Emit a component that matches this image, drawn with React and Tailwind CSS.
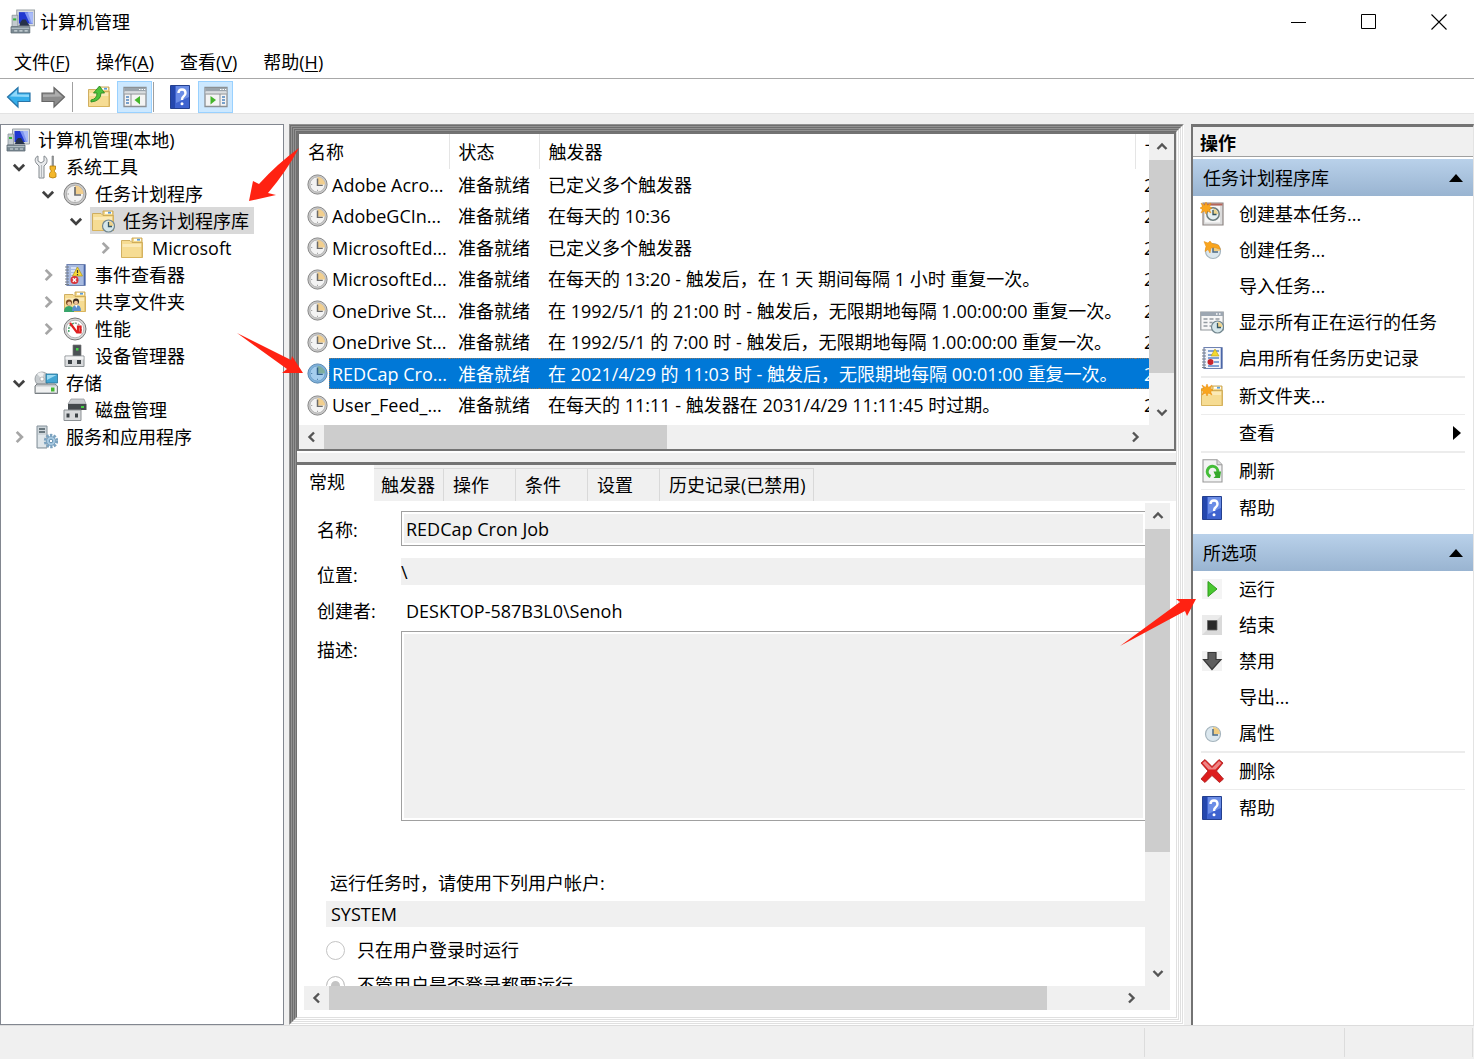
import React from "react";

/* ---------- icons ---------- */

function Svg({ children, className = "size-6", box = "0 0 24 24" }) {
  return (
    <svg viewBox={box} className={`shrink-0 ${className}`} aria-hidden="true">
      {children}
    </svg>
  );
}

function ComputerIcon({ className }) {
  return (
    <Svg className={className}>
      <path d="M6.500 1h17v15h-17z" fill="#d9dde0" stroke="#9aa1a6" />
      <path d="M8.500 3h13.500v11H8.500z" fill="#2038d0" />
      <path d="M14 3h8v11h-3z" fill="#7d94f0" />
      <path d="M17 3h5v11h-1z" fill="#a9bbf8" />
      <path d="M2 6h5.500v11H2z" fill="#c3cacf" stroke="#8b959c" strokeWidth=".8" />
      <path d="M3 9h3v2H3z" fill="#35b53a" />
      <path d="M10 12.500l2-2.500h3l2 3.500 2 2.500H9z" fill="#26324a" />
      <path d="M1 17h18v6H1z" fill="#7b8a93" stroke="#5d6b73" strokeWidth=".8" />
      <path d="M1.500 18.500h17" stroke="#b4c0c6" strokeWidth="1.200" />
      <path d="M4 21h3M9 21h3M14 21h3" stroke="#d5dde1" strokeWidth="1.200" />
    </Svg>
  );
}

function ToolsIcon() {
  return (
    <Svg>
      <path d="M4 1v5l3 2 3-2V1c3 1 4 5 2 8l-2 2v12H5V11L3 9C0 6 1 2 4 1z" fill="#e8eaec" stroke="#858b90" />
      <path d="M7.500 10v12" stroke="#b3b8bc" />
      <path d="M18 1h1.500v11H18z" fill="#9aa0a4" stroke="#777" strokeWidth=".6" />
      <path d="M16 11h5.500v3l-1 1.500v1l1.500 2V22q-3 2-6.500 0v-3.500l1.500-2v-1L16 14z" fill="#f3b72c" stroke="#b37b08" strokeWidth=".8" />
    </Svg>
  );
}

function ClockIcon({ className, blue = false }) {
  return (
    <Svg className={className}>
      <circle cx="12" cy="12" r="11" fill={blue ? "#7fb2dc" : "#c9c9c9"} stroke={blue ? "#4f7fa8" : "#7d7d7d"} />
      <circle cx="12" cy="12" r="8.600" fill={blue ? "#a5cdee" : "#f3f3f3"} stroke={blue ? "#6698c2" : "#a5a5a5"} strokeWidth=".8" />
      <path d="M12 12V3.500a8.500 8.500 0 0 1 8.500 8.500z" fill={blue ? "#7fae9f" : "#f2cf8e"} />
      <path d="M12 5v8h6" fill="none" stroke={blue ? "#2f5f8a" : "#6c6c6c"} strokeWidth="1.700" />
      <path d="M4.500 12h1.500M12 18v1.500" stroke={blue ? "#4679a5" : "#999"} />
    </Svg>
  );
}

function FolderShape() {
  return (
    <>
      <path d="M12 2h10v5H12z" fill="#f3d98c" stroke="#c7a24c" strokeWidth=".9" />
      <path d="M14 2.800h7v2h-7z" fill="#fff" />
      <path d="M17 2.800h3v1.800h-3z" fill="#5b9bd8" />
      <path d="M1.500 4.500H10l2 2h10.500v15h-21z" fill="#f6dc93" stroke="#cba856" strokeWidth=".9" />
      <path d="M2.500 8h19v3h-19z" fill="#fbeab8" />
      <path d="M22 7v14.500H2" fill="none" stroke="#d9b55c" />
    </>
  );
}

function FolderIcon() {
  return (
    <Svg>
      <FolderShape />
    </Svg>
  );
}

function SmallClock() {
  return (
    <>
      <circle cx="17.500" cy="17" r="6" fill="#d5e6ea" stroke="#71868e" strokeWidth="1.200" />
      <path d="M17.500 17v-5a5 5 0 0 1 5 5z" fill="#f0d48d" />
      <path d="M17.500 13v4.500h3.500" fill="none" stroke="#365764" strokeWidth="1.300" />
    </>
  );
}

function FolderClockIcon() {
  return (
    <Svg>
      <FolderShape />
      <SmallClock />
    </Svg>
  );
}

function NotebookShape({ fill }) {
  return (
    <>
      <path d="M4 1.500h18v21H4z" fill={fill} stroke="#6f82b0" strokeWidth="1.200" />
      <path d="M21.500 2v20" stroke="#4a66a8" strokeWidth="1.600" />
      <path d="M2 4h4M2 7h4M2 10h4M2 13h4M2 16h4M2 19h4M2 21.500h4" stroke="#777f87" strokeWidth="1.100" />
    </>
  );
}

function EventIcon() {
  return (
    <Svg>
      <NotebookShape fill="#a8bbe0" />
      <path d="M8 5h5M8 8h4M8 11h3M8 14h3" stroke="#e8eefc" strokeWidth="1.400" />
      <path d="M14.500 4l5 9h-10z" fill="#f7d93a" stroke="#b39615" strokeWidth=".7" />
      <path d="M14.500 7v3M14.500 11v1.200" stroke="#333" strokeWidth="1.200" />
      <circle cx="11.500" cy="17" r="4" fill="#d8343a" />
      <path d="M9.800 15.300l3.400 3.400M13.200 15.300l-3.400 3.400" stroke="#fff" strokeWidth="1.300" />
    </Svg>
  );
}

function HistoryIcon() {
  return (
    <Svg>
      <NotebookShape fill="#f2f5fb" />
      <path d="M8 5h11M8 9h4M8 12h11M14 16h5M8 20h11" stroke="#5c86c8" strokeWidth="1.300" />
      <path d="M15 3l4 7h-8z" fill="#f4d92f" stroke="#b99c14" strokeWidth=".6" />
      <circle cx="10.500" cy="16" r="3" fill="#c9252b" />
    </Svg>
  );
}

function SharedIcon() {
  return (
    <Svg>
      <FolderShape />
      <circle cx="6" cy="12.500" r="3" fill="#7b4a24" />
      <circle cx="6.300" cy="13.600" r="2" fill="#f0c49c" />
      <path d="M1 22q0-6 5-6t5 6z" fill="#36a56b" />
      <circle cx="13" cy="11.500" r="3" fill="#3b2a1e" />
      <circle cx="13" cy="12.700" r="2" fill="#f0c49c" />
      <path d="M9 21q0-6 4.500-6t4.500 6z" fill="#5b8fce" />
      <path d="M12 15l1.300 3 1.300-3z" fill="#fff" />
    </Svg>
  );
}

function PerfIcon() {
  return (
    <Svg>
      <circle cx="12" cy="12" r="11" fill="#d8d8d8" stroke="#777" />
      <circle cx="12" cy="12" r="8.800" fill="#fff" stroke="#aaa" strokeWidth=".8" />
      <path d="M6 15a7 7 0 0 1 6-9" fill="none" stroke="#4aa36c" strokeWidth="1.500" strokeDasharray="2 1" />
      <path d="M12 6a7 7 0 0 1 6 9" fill="none" stroke="#999" strokeWidth="1.500" strokeDasharray="2 1" />
      <path d="M7 6l7 9.500h3.500V9.500H15V15" fill="none" stroke="#e02020" strokeWidth="2.200" />
    </Svg>
  );
}

function DeviceIcon() {
  return (
    <Svg>
      <path d="M10 1h8v12h-8z" fill="#4b5155" stroke="#777" strokeWidth=".7" />
      <path d="M13 4h2.500v2.500H13z" fill="#46d34b" />
      <path d="M2 12h19v10.500H2z" fill="#d8dadc" stroke="#8c9194" />
      <path d="M2.500 12.500h18v3h-18z" fill="#f2f3f4" />
      <path d="M5 16h4v4H5zM14 16h4v4h-4z" fill="#3c4246" />
    </Svg>
  );
}

function StorageIcon() {
  return (
    <Svg>
      <circle cx="8" cy="8" r="7" fill="#c7cccf" stroke="#8a9196" strokeWidth=".8" />
      <path d="M8 8L3 3q3-3 7-1z" fill="#eef0f1" />
      <circle cx="8" cy="8" r="2" fill="#fff" stroke="#999" strokeWidth=".6" />
      <path d="M12 3h11.500v9H12z" fill="#42a5d3" stroke="#266e93" strokeWidth=".8" />
      <path d="M13 4h9.500l-9.500 5z" fill="#9cdaf2" />
      <path d="M1 15l2-2h18l2.500 2v7.500H1z" fill="#c4c8cb" stroke="#787e82" />
      <path d="M2 15.500h20.500v5.500H2z" fill="#f0f1f1" />
      <path d="M17 16.500h3.500v4H17z" fill="#45b630" />
    </Svg>
  );
}

function DiskIcon() {
  return (
    <Svg>
      <path d="M8 1h13l2 5H5z" fill="#c9cccf" stroke="#8f9498" strokeWidth=".7" />
      <path d="M5 6h18.500v6H5z" fill="#44494d" />
      <path d="M18 8h3v2h-3z" fill="#45d345" />
      <path d="M1 12h17v10.500H1z" fill="#d8dadc" stroke="#8c9194" />
      <path d="M3.500 15.500h3v4h-3zM12 15.500h3v4h-3z" fill="#3c4246" />
    </Svg>
  );
}

function ServicesIcon() {
  return (
    <Svg>
      <path d="M3 1h10v22H3z" fill="#cdd5da" stroke="#84919a" />
      <path d="M5 4h6M5 7h6" stroke="#4a5961" strokeWidth="1.400" />
      <path d="M4 10h8v12H4z" fill="#dfe6ea" />
      <circle cx="17" cy="16" r="5.800" fill="none" stroke="#7ba2bf" strokeWidth="2.800" strokeDasharray="2.400 1.250" />
      <circle cx="17" cy="16" r="4.500" fill="#a9cbe3" stroke="#7ba2bf" />
      <circle cx="17" cy="16" r="1.800" fill="#fff" stroke="#5f8cad" />
    </Svg>
  );
}

function BackIcon() {
  return (
    <Svg className="h-6 w-[26px]" box="0 0 26 24">
      <path d="M1.500 12L12 2.500V8h12v8.500H12V22z" fill="#35aeea" stroke="#2874a8" strokeWidth="1.200" />
      <path d="M4 11.500L11 5v4.500h12V12z" fill="#8fd8fa" />
    </Svg>
  );
}

function ForwardIcon() {
  return (
    <Svg className="h-6 w-[26px]" box="0 0 26 24">
      <path d="M24.500 12L14 2.500V8H2v8.500h12V22z" fill="#8c8c8c" stroke="#666" strokeWidth="1.200" />
      <path d="M22 11.500L15 5v4.500H3V12z" fill="#adadad" />
    </Svg>
  );
}

function FolderUpIcon() {
  return (
    <Svg>
      <FolderShape />
      <path d="M4 15q6-1 6-7H6.500L12.500 1l5 7H14q0 8-10 9z" fill="#4cc23c" stroke="#2b8a23" strokeWidth=".9" />
    </Svg>
  );
}

function PaneIcon({ right = false }) {
  return (
    <Svg className="h-[22px] w-6" box="0 0 24 22">
      <path d="M1 1.500h22v19H1z" fill="#f4f4f4" stroke="#8b9094" strokeWidth="1.300" />
      <path d="M1.500 2h21v3.500h-21z" fill="#9aa4ac" />
      <path d="M16 3.500h1.500M18.500 3.500H20M21 3.500h1.200" stroke="#fff" strokeWidth="1.200" />
      <path d="M1.500 6.500h21" stroke="#d9dde0" strokeWidth="2" />
      {right ? (
        <>
          <path d="M16 8v12M1.500 8h21" stroke="#8b9094" />
          <path d="M18 11h3M18 14h3M18 17h3" stroke="#4e84bd" strokeWidth="1.500" />
          <path d="M6.500 10l5.500 4-5.500 4.500z" fill="#45b52c" />
        </>
      ) : (
        <>
          <path d="M8 8v12M1.500 8h21" stroke="#8b9094" />
          <path d="M3 11h3M3 14h3M3 17h3" stroke="#4e84bd" strokeWidth="1.500" />
          <path d="M17 10l-5.500 4 5.500 4.500z" fill="#45b52c" />
        </>
      )}
    </Svg>
  );
}

function HelpIcon() {
  return (
    <Svg>
      <path d="M2.500.5h19v23h-19z" fill="#3e63cf" stroke="#24408f" />
      <path d="M3 1h4v22H3z" fill="#2447ad" />
      <path d="M8 1h13v11L8 18z" fill="#6b8de6" />
      <path d="M10.500 8q0-3.500 3.500-3.500T17.500 8q0 2-1.800 3.300Q14 12.500 14 15" fill="none" stroke="#fff" strokeWidth="2.400" />
      <circle cx="14" cy="18.700" r="1.500" fill="#fff" />
    </Svg>
  );
}

function Spark({ x, y }) {
  return (
    <g transform={`translate(${x} ${y})`}>
      <path d="M0-6l1.500 3.500L5-5 3.500-1.500 6 0 3.500 1.500 5 5 1.500 3 0 6l-1.500-3L-5 5l1.500-3.500L-6 0l2.500-1.500L-5-5l3.500 2.500z" fill="#f9a51e" stroke="#e58a0c" strokeWidth=".5" />
    </g>
  );
}

function BasicTaskIcon() {
  return (
    <Svg>
      <path d="M3 1h20v22H3z" fill="#dcdcdc" stroke="#8e8583" strokeWidth="1.200" />
      <path d="M4 1.500h18.500v2H4z" fill="#b5655a" />
      <path d="M5 4h15v16.500H5z" fill="#f6f6f6" />
      <circle cx="13" cy="12" r="6.200" fill="#e6eff0" stroke="#6c7c7c" strokeWidth="1.500" />
      <path d="M13 12V7a5 5 0 0 1 5 5z" fill="#ecd58f" />
      <path d="M13 8v4.500h3.500" fill="none" stroke="#33525a" strokeWidth="1.300" />
      <Spark x={6} y={6} />
    </Svg>
  );
}

function TaskIcon({ spark = false }) {
  return (
    <Svg>
      <circle cx="13" cy="13" r="7.500" fill="#dbe7ee" stroke="#a5b4bd" strokeWidth="1.200" />
      <path d="M13 13V6a7 7 0 0 1 7 7z" fill="#f1cd81" />
      <path d="M13 8v6h5" fill="none" stroke="#4d6b83" strokeWidth="1.500" />
      {spark && <path d="M4 3.500l4 1.500 2-2 2 2.500 6.500 1.500 2 4.500-5.500-2-4 .5-1 5-2-3.500-3 2 1-5z" fill="#f9a51e" stroke="#e58a0c" strokeWidth=".5" />}
    </Svg>
  );
}

function RunningIcon() {
  return (
    <Svg>
      <path d="M.8 2h22.400v18H.8z" fill="#f7f7f7" stroke="#92979b" strokeWidth="1.200" />
      <path d="M1 2h22v4H1z" fill="#9da7b2" />
      <path d="M16 4h1.500M19 4h1.500" stroke="#fff" strokeWidth="1.300" />
      <path d="M3.500 9h4M9.500 9h4M15.500 9h4M3.500 12.500h4M9.500 12.500h3M3.500 16h4M9.500 16h2" stroke="#949ba1" strokeWidth="1.300" />
      <SmallClock />
    </Svg>
  );
}

function NewFolderIcon() {
  return (
    <Svg>
      <FolderShape />
      <Spark x={7} y={6} />
    </Svg>
  );
}

function RefreshIcon() {
  return (
    <Svg>
      <path d="M3 .8h14l5 5V23H3z" fill="#f2f3f3" stroke="#999" strokeWidth="1.100" />
      <path d="M17 .8v5h5" fill="#ddd" stroke="#999" />
      <path d="M10.500 17.500A5.300 5.300 0 1 1 17.800 13" fill="none" stroke="#43bd37" strokeWidth="3" />
      <path d="M13.500 12.500H21l-1 6.500h-6.500l2-2z" fill="#36a92c" />
    </Svg>
  );
}

function RunIcon() {
  return (
    <Svg>
      <path d="M2 2h20v20H2z" fill="#f4f4f4" />
      <path d="M8 4.500l9 7.500-9 7.500z" fill="#49c82f" stroke="#2e9c1d" />
    </Svg>
  );
}

function EndIcon() {
  return (
    <Svg>
      <path d="M2 2h20v20H2z" fill="#dadada" />
      <path d="M2 2h20L2 22z" fill="#ebebeb" />
      <path d="M7.500 7.500h9.500V17H7.500z" fill="#292929" stroke="#666" strokeWidth=".8" />
    </Svg>
  );
}

function DisableIcon() {
  return (
    <Svg>
      <path d="M2 2h20v20H2z" fill="#f2f2f2" />
      <path d="M8 3.500h8v7h5L12 20.500 3.500 10.500H8z" fill="#5e5e5e" stroke="#383838" strokeWidth="1.200" />
    </Svg>
  );
}

function DeleteIcon() {
  return (
    <Svg>
      <path d="M1 4l4-3.500 7 7 7-7L23 4l-6.500 8 7 8-4 3.500-7.500-7-7 7-4-3.500 7-8z" fill="#dd1d1d" stroke="#a71919" strokeWidth=".8" />
      <path d="M2.500 4L5 2l7 7 7-7 2.500 2-6 6.500h-7z" fill="#ee8585" />
    </Svg>
  );
}

function Chevron({ dir, className = "size-3.5 text-[#555]" }) {
  const d = {
    up: "M2.500 9L7 4.500 11.500 9",
    down: "M2.500 5L7 9.500 11.500 5",
    left: "M9 2.500L4.500 7 9 11.500",
    right: "M5 2.500L9.500 7 5 11.500",
  }[dir];
  return (
    <Svg box="0 0 14 14" className={className}>
      <path d={d} fill="none" stroke="currentColor" strokeWidth="2.400" />
    </Svg>
  );
}

/* ---------- window chrome ---------- */

function TitleBar() {
  return (
    <header className="flex h-[43px] shrink-0 items-center pl-2.5">
      <ComputerIcon className="size-[25px]" />
      <h1 className="ml-[5px]">计算机管理</h1>
      <div className="ml-auto flex h-full">
        <button aria-label="最小化" className="flex w-[70px] items-center justify-center">
          <Svg box="0 0 16 16" className="size-4">
            <path d="M0 8.500h15" stroke="#000" />
          </Svg>
        </button>
        <button aria-label="最大化" className="flex w-[70px] items-center justify-center">
          <Svg box="0 0 16 16" className="size-4">
            <path d="M.5 .5h14v14H.5z" fill="none" stroke="#000" />
          </Svg>
        </button>
        <button aria-label="关闭" className="flex w-[70px] items-center justify-center">
          <Svg box="0 0 16 16" className="size-4">
            <path d="M.5 .5l15 15M15.500 .5l-15 15" stroke="#000" strokeWidth="1.100" />
          </Svg>
        </button>
      </div>
    </header>
  );
}

function MenuBar() {
  const menus = [["文件", "F"], ["操作", "A"], ["查看", "V"], ["帮助", "H"]];
  return (
    <nav className="flex h-9 shrink-0 items-center border-b border-[#a8a8a8] pt-0.5 pl-px">
      {menus.map(([name, key]) => (
        <button key={key} className="px-[13px]">
          {name}(<u className="underline-offset-2">{key}</u>)
        </button>
      ))}
    </nav>
  );
}

function Toolbar() {
  return (
    <div className="flex h-[35px] shrink-0 items-center border-b border-[#e3e3e3] pt-0.5 pl-1.5">
      <button aria-label="后退"><BackIcon /></button>
      <button aria-label="前进" className="ml-2"><ForwardIcon /></button>
      <span className="ml-1.5 h-[30px] w-px bg-[#a0a0a0]" />
      <button aria-label="上移一级" className="ml-3.5"><FolderUpIcon /></button>
      <button aria-label="显示控制台树" className="ml-1.5 flex h-8 w-[35px] items-center justify-center border border-[#99d1ff] bg-[#cce8ff]">
        <PaneIcon />
      </button>
      <span className="ml-px h-[30px] w-px bg-[#a0a0a0]" />
      <button aria-label="帮助" className="ml-3.5"><HelpIcon /></button>
      <button aria-label="显示操作窗格" className="ml-1.5 flex h-8 w-[35px] items-center justify-center border border-[#99d1ff] bg-[#cce8ff]">
        <PaneIcon right />
      </button>
    </div>
  );
}

/* ---------- console tree ---------- */

const indents = ["pl-[4px]", "pl-[4px]", "pl-[33px]", "pl-[61px]", "pl-[90px]"];

const tree = [
  { level: 0, icon: <ComputerIcon />, label: "计算机管理(本地)" },
  { level: 1, open: true, icon: <ToolsIcon />, label: "系统工具" },
  { level: 2, open: true, icon: <ClockIcon />, label: "任务计划程序" },
  { level: 3, open: true, icon: <FolderClockIcon />, label: "任务计划程序库", selected: true },
  { level: 4, open: false, icon: <FolderIcon />, label: "Microsoft" },
  { level: 2, open: false, icon: <EventIcon />, label: "事件查看器" },
  { level: 2, open: false, icon: <SharedIcon />, label: "共享文件夹" },
  { level: 2, open: false, icon: <PerfIcon />, label: "性能" },
  { level: 2, icon: <DeviceIcon />, label: "设备管理器" },
  { level: 1, open: true, icon: <StorageIcon />, label: "存储" },
  { level: 2, icon: <DiskIcon />, label: "磁盘管理" },
  { level: 1, open: false, icon: <ServicesIcon />, label: "服务和应用程序" },
];

function Tree() {
  return (
    <aside className="w-[284px] shrink-0 border border-[#828790] bg-white pt-px">
      <ul role="tree">
        {tree.map((n) => (
          <li key={n.label} role="treeitem" className={`flex h-[27px] items-center ${indents[n.level]}`}>
            {n.level > 0 && (
              <span className="flex w-7 shrink-0 justify-center">
                {n.open === true && <Chevron dir="down" className="size-4 text-[#404040]" />}
                {n.open === false && <Chevron dir="right" className="size-4 text-[#a6a6a6]" />}
              </span>
            )}
            <button className={`flex h-[27px] items-center pr-[5px] pl-px ${n.selected ? "bg-[#d9d9d9]" : ""}`}>
              {n.icon}
              <span className="ml-2 whitespace-nowrap">{n.label}</span>
            </button>
          </li>
        ))}
      </ul>
    </aside>
  );
}

/* ---------- scroll bars ---------- */

function VScroll({ thumb }) {
  return (
    <div className="flex w-[25px] shrink-0 flex-col items-stretch bg-[#f0f0f0]">
      <button aria-label="向上滚动" className="flex h-[26px] shrink-0 items-center justify-center">
        <Chevron dir="up" />
      </button>
      <div className="min-h-0 flex-1"><div className={`bg-[#cdcdcd] ${thumb}`} /></div>
      <button aria-label="向下滚动" className="flex h-[26px] shrink-0 items-center justify-center">
        <Chevron dir="down" />
      </button>
    </div>
  );
}

function HScroll({ thumb }) {
  return (
    <div className="flex h-6 shrink-0 bg-[#f0f0f0] pr-[26px]">
      <button aria-label="向左滚动" className="flex w-[25px] items-center justify-center">
        <Chevron dir="left" />
      </button>
      <div className="flex-1"><div className={`h-full bg-[#cdcdcd] ${thumb}`} /></div>
      <button aria-label="向右滚动" className="flex w-[26px] items-center justify-center">
        <Chevron dir="right" />
      </button>
    </div>
  );
}

/* ---------- task list ---------- */

const tasks = [
  ["Adobe Acro...", "已定义多个触发器"],
  ["AdobeGCIn...", "在每天的 10:36"],
  ["MicrosoftEd...", "已定义多个触发器"],
  ["MicrosoftEd...", "在每天的 13:20 - 触发后，在 1 天 期间每隔 1 小时 重复一次。"],
  ["OneDrive St...", "在 1992/5/1 的 21:00 时 - 触发后，无限期地每隔 1.00:00:00 重复一次。"],
  ["OneDrive St...", "在 1992/5/1 的 7:00 时 - 触发后，无限期地每隔 1.00:00:00 重复一次。"],
  ["REDCap Cro...", "在 2021/4/29 的 11:03 时 - 触发后，无限期地每隔 00:01:00 重复一次。"],
  ["User_Feed_...", "在每天的 11:11 - 触发器在 2031/4/29 11:11:45 时过期。"],
];

function TaskList() {
  return (
    <section className="flex shrink-0 flex-col border-2 border-[#737373] bg-white">
      <div className="flex h-[291px]">
        <div className="min-w-0 flex-1 overflow-hidden">
          <table className="w-full table-fixed border-collapse text-left whitespace-nowrap">
            <colgroup>
              <col className="w-[150px]" />
              <col className="w-[90px]" />
              <col />
              <col className="w-[14px]" />
            </colgroup>
            <thead>
              <tr className="h-[35px] *:border-r *:border-[#e5e5e5] *:p-0 *:pl-[9px] *:font-normal *:last:border-r-0">
                <th>名称</th>
                <th>状态</th>
                <th>触发器</th>
                <th className="overflow-hidden">下</th>
              </tr>
            </thead>
            <tbody>
              {tasks.map(([name, trigger], i) => {
                const sel = i === 6;
                const cell = sel ? "border-y border-dotted border-[#8a7a6a] bg-[#0078d7] text-white" : "";
                return (
                  <tr key={i} className="odd:h-[31px] even:h-8">
                    <td className="p-0">
                      <div className="flex items-center pl-2">
                        <ClockIcon className="size-[21px]" blue={sel} />
                        <span className={`ml-px flex h-[31px] flex-1 items-center ${sel ? "border-l pl-0.5" : "pl-[3px]"} ${cell}`}>{name}</span>
                      </div>
                    </td>
                    <td className="p-0"><div className={`flex h-[31px] items-center pl-[9px] ${cell}`}>准备就绪</div></td>
                    <td className="p-0"><div className={`flex h-[31px] items-center overflow-hidden pl-[9px] ${cell}`}>{trigger}</div></td>
                    <td className="overflow-hidden p-0"><div className={`flex h-[31px] items-center overflow-hidden pl-[9px] ${cell}`}>2</div></td>
                  </tr>
                );
              })}
            </tbody>
          </table>
        </div>
        <VScroll thumb="h-[89%]" />
      </div>
      <HScroll thumb="w-[43%]" />
    </section>
  );
}

/* ---------- task details ---------- */

const tabs = [
  ["触发器", "w-[70px] pl-[7px]"],
  ["操作", "w-[72px] pl-[9px]"],
  ["条件", "w-[72px] pl-[9px]"],
  ["设置", "w-[72px] pl-[9px]"],
  ["历史记录(已禁用)", "pr-[7px] pl-[9px]"],
];

const boxed = "block w-full border border-r-0 border-[#a0a0a0] bg-[#f0f0f0] px-1 shadow-[inset_0_0_0_2px_#fff] resize-none outline-none";

function Details() {
  return (
    <section className="flex min-h-0 flex-1 flex-col border-t-[3px] border-[#737373] bg-[#f0f0f0]">
      <div role="tablist" className="flex h-9 shrink-0 items-end whitespace-nowrap">
        <button role="tab" aria-selected="true" className="h-full w-[77px] bg-white pb-0.5 pl-3 text-left">常规</button>
        {tabs.map(([label, cls]) => (
          <button key={label} role="tab" aria-selected="false" className={`h-[33px] border-t border-r border-[#d9d9d9] text-left ${cls}`}>
            {label}
          </button>
        ))}
      </div>
      <div className="flex min-h-0 flex-1 flex-col bg-white pt-0.5 pr-1.5 pb-[7px] pl-[7px]">
        <div className="flex min-h-0 flex-1">
          <form className="min-w-0 flex-1 overflow-hidden pt-2">
            <div className="grid grid-cols-[84px_1fr] pl-[13px]">
              <label htmlFor="name" className="pt-[7px]">名称:</label>
              <input id="name" readOnly value="REDCap Cron Job" className={`h-[35px] ${boxed}`} />
              <label htmlFor="place" className="mt-3 pt-[5px]">位置:</label>
              <input id="place" readOnly value={"\\"} className="mt-3 h-[27px] w-full bg-[#f0f0f0] outline-none" />
              <span className="mt-3">创建者:</span>
              <span className="mt-3 pl-[5px]">DESKTOP-587B3L0\Senoh</span>
              <label htmlFor="desc" className="mt-2 pt-[7px]">描述:</label>
              <textarea id="desc" readOnly className={`mt-2 h-[190px] ${boxed}`} />
            </div>
            <div className="mt-[50px] pl-[22px]">
              <label htmlFor="account" className="block pl-1">运行任务时，请使用下列用户帐户:</label>
              <input id="account" readOnly value="SYSTEM" className="mt-1.5 block h-[26px] w-full bg-[#f0f0f0] pl-[5px] outline-none" />
              <label className="mt-[11px] flex items-center">
                <input type="radio" name="logon" disabled className="size-[19px] appearance-none rounded-full border border-[#c4c4c4] bg-white" />
                <span className="ml-3">只在用户登录时运行</span>
              </label>
              <label className="mt-[11px] flex items-center">
                <input type="radio" name="logon" disabled defaultChecked className="size-[19px] appearance-none rounded-full border border-[#c4c4c4] bg-[#c4c4c4] shadow-[inset_0_0_0_4px_#fff]" />
                <span className="ml-3">不管用户是否登录都要运行</span>
              </label>
            </div>
          </form>
          <VScroll thumb="h-[75%]" />
        </div>
        <HScroll thumb="w-[91%]" />
      </div>
    </section>
  );
}

/* Stacked sunken edges: dark on the top and left, light on the bottom and right. */
function Bevels({ depth, children }) {
  if (depth === 0) return children;
  return (
    <div className="flex min-h-0 min-w-0 flex-1 flex-col border border-t-[#929292] border-r-white border-b-white border-l-[#929292]">
      <div className="flex min-h-0 min-w-0 flex-1 flex-col border border-t-[#6e6e6e] border-r-[#e0e0e0] border-b-[#e0e0e0] border-l-[#6e6e6e]">
        <Bevels depth={depth - 1}>{children}</Bevels>
      </div>
    </div>
  );
}

/* ---------- actions pane ---------- */

const groups = [
  {
    title: "任务计划程序库",
    items: [
      { icon: <BasicTaskIcon />, label: "创建基本任务..." },
      { icon: <TaskIcon spark />, label: "创建任务..." },
      { label: "导入任务..." },
      { icon: <RunningIcon />, label: "显示所有正在运行的任务" },
      { icon: <HistoryIcon />, label: "启用所有任务历史记录", line: "h-0.5" },
      { icon: <NewFolderIcon />, label: "新文件夹...", line: "h-px" },
      { label: "查看", more: true, line: "h-0.5" },
      { icon: <RefreshIcon />, label: "刷新", line: "h-px" },
      { icon: <HelpIcon />, label: "帮助" },
    ],
  },
  {
    title: "所选项",
    items: [
      { icon: <RunIcon />, label: "运行" },
      { icon: <EndIcon />, label: "结束" },
      { icon: <DisableIcon />, label: "禁用" },
      { label: "导出..." },
      { icon: <TaskIcon />, label: "属性", line: "h-0.5" },
      { icon: <DeleteIcon />, label: "删除", line: "h-px" },
      { icon: <HelpIcon />, label: "帮助" },
    ],
  },
];

function Actions() {
  return (
    <aside className="w-[283px] shrink-0 border-t-[3px] border-r border-l-2 border-t-[#737373] border-r-[#e3e3e3] border-l-[#737373] bg-white">
      <h2 className="flex h-[30px] items-center border-b border-[#a0a0a0] bg-[#f0f0f0] pt-0.5 pl-[7px] font-bold">操作</h2>
      <div className="pt-0.5">
        {groups.map((g) => (
          <section key={g.title} className="mb-2">
            <button className="flex h-[37px] w-full items-center justify-between bg-linear-to-b from-[#b9d1ea] to-[#99b4d1] pr-2.5 pl-2.5">
              {g.title}
              <Svg box="0 0 14 8" className="h-2 w-3.5"><path d="M7 0l7 8H0z" /></Svg>
            </button>
            <ul>
              {g.items.map((it) => (
                <li key={it.label}>
                  <button className="flex h-9 w-full items-center pr-3 pl-[7px]">
                    <span className="mr-[15px] flex w-6 shrink-0">{it.icon}</span>
                    {it.label}
                    {it.more && (
                      <Svg box="0 0 8 14" className="ml-auto h-3.5 w-2"><path d="M0 0l8 7-8 7z" /></Svg>
                    )}
                  </button>
                  {it.line && <div className={`mr-2 ml-2 bg-[#ececec] ${it.line}`} />}
                </li>
              ))}
            </ul>
          </section>
        ))}
      </div>
    </aside>
  );
}

export default function App() {
  return (
    <div className="relative flex h-screen flex-col overflow-hidden bg-white font-['Open_Sans','Noto_Sans_CJK_SC',sans-serif] text-[18px] leading-[24px] text-black">
      <TitleBar />
      <MenuBar />
      <Toolbar />
      <main className="flex min-h-0 flex-1 bg-[#f0f0f0] pt-2.5">
        <Tree />
        <div className="mr-[7px] ml-[5px] flex min-w-0 flex-1">
          <Bevels depth={4}>
            <TaskList />
            <div className="h-[11px] shrink-0 border-t-2 border-white bg-[#f0f0f0]" />
            <Details />
          </Bevels>
        </div>
        <Actions />
      </main>
      <footer className="flex h-[34px] shrink-0 justify-end border-t border-[#dcdcdc] bg-[#f0f0f0] py-0.5 pr-px">
        <div className="w-[200px] border-l border-[#dcdcdc]" />
        <div className="w-[129px] border-x border-[#dcdcdc]" />
      </footer>

      {/* annotation arrows drawn over the window */}
      <Svg box="0 0 51 54" className="absolute top-[148px] left-[249px] h-[54px] w-[51px]">
        <path d="M0 53L4 33l6 3Q28 16 50 0 37 24 19 45l8 2z" fill="#ff2212" />
      </Svg>
      <Svg box="0 0 66 41" className="absolute top-[333px] left-[237px] h-[41px] w-[66px]">
        <path d="M0 0l54 27 1-4 11 17H45l5-4z" fill="#ff2212" />
      </Svg>
      <Svg box="0 0 77 47" className="absolute top-[599px] left-[1120px] h-[47px] w-[77px]">
        <path d="M0 47L60 3l-4-3h20l-9 17-2-5z" fill="#ff2212" />
      </Svg>
    </div>
  );
}
